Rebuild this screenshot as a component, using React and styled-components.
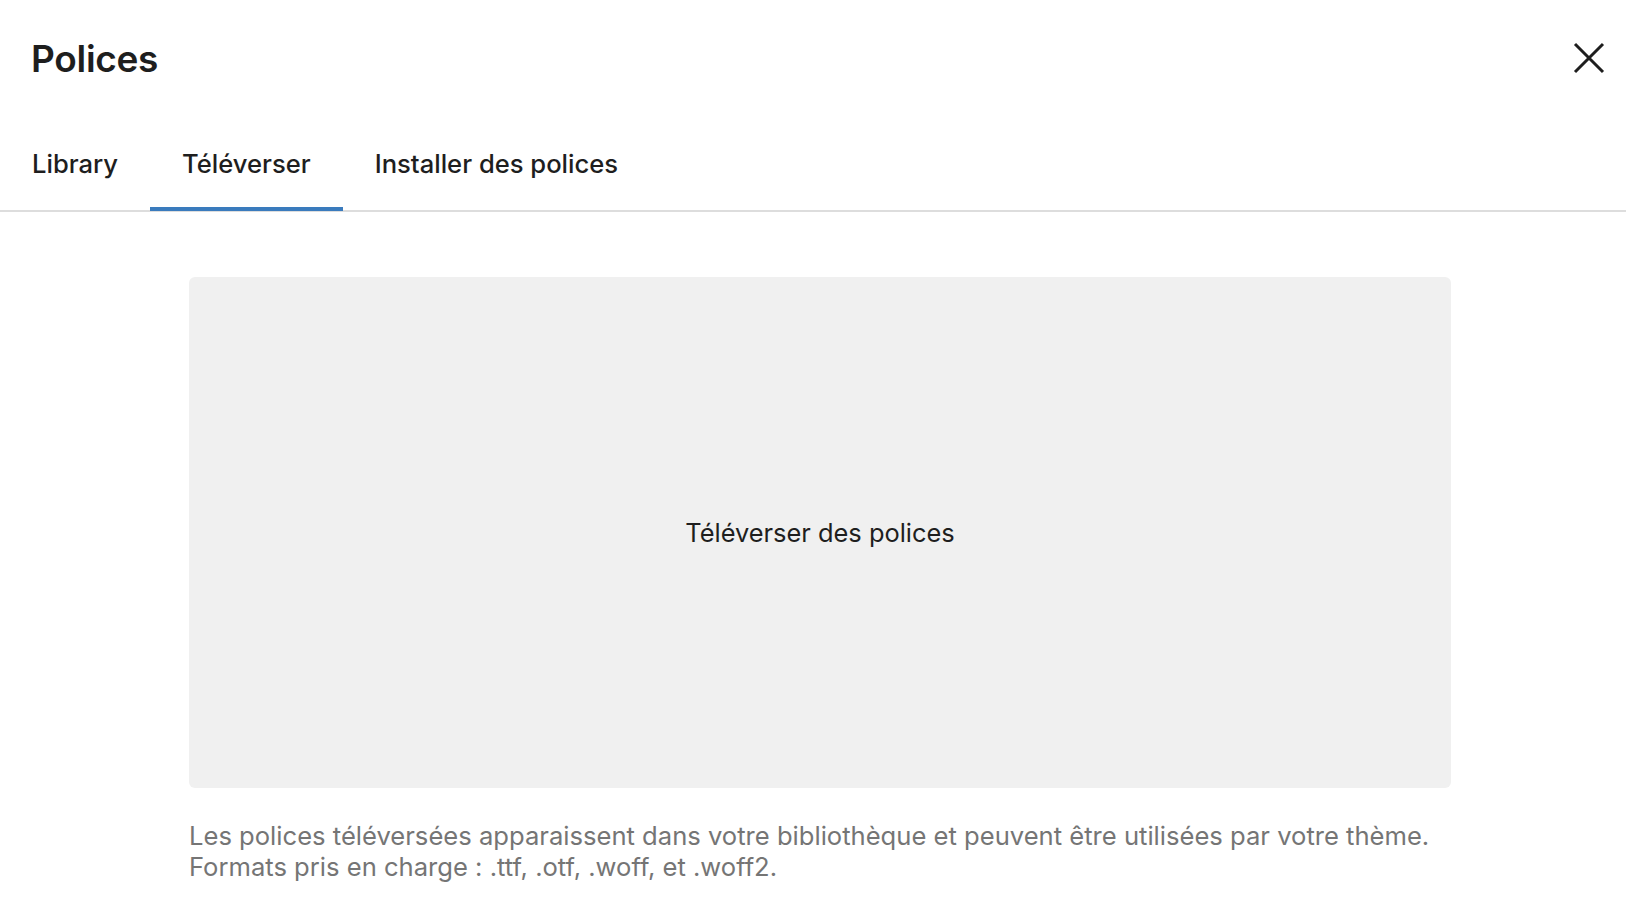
import React, { useState } from 'react';
import styled, { createGlobalStyle } from 'styled-components';

const GlobalStyle = createGlobalStyle`
  html, body {
    margin: 0;
    padding: 0;
    background: #fff;
  }
  body {
    font-family: Inter, "Noto Sans", "Liberation Sans", sans-serif;
    color: #1e1e1e;
  }
`;

const Modal = styled.div`
  width: 1626px;
  height: 900px;
  overflow: hidden;
  background: #fff;
`;

const Header = styled.header`
  display: flex;
  align-items: center;
  justify-content: space-between;
  height: 116px;
  padding: 0 13px 0 31px;
  box-sizing: border-box;
`;

const Title = styled.h1`
  margin: 0;
  font-size: 37px;
  font-weight: 600;
  letter-spacing: -0.3px;
  color: #1e1e1e;
`;

const CloseButton = styled.button`
  display: flex;
  align-items: center;
  justify-content: center;
  width: 48px;
  height: 48px;
  padding: 0;
  border: none;
  background: none;
  cursor: pointer;
  color: #1e1e1e;
`;

const TabList = styled.div`
  display: flex;
  border-bottom: 2px solid #dddddd;
`;

const Tab = styled.button`
  position: relative;
  height: 94px;
  padding: 0 32px;
  border: none;
  background: none;
  font-family: inherit;
  font-size: 25.6px;
  font-weight: 500;
  color: #1e1e1e;
  cursor: pointer;

  &::after {
    content: '';
    position: absolute;
    left: 0;
    right: 0;
    bottom: -1px;
    height: 4px;
    background: ${(p) => (p.$active ? '#3a7bbd' : 'transparent')};
  }
`;

const Content = styled.div`
  padding: 65px 175px 0 189px;
`;

const DropZone = styled.div`
  display: flex;
  align-items: center;
  justify-content: center;
  height: 511px;
  border-radius: 6px;
  background: #f0f0f0;
  font-size: 25.4px;
  color: #1e1e1e;
`;

const HelpText = styled.p`
  margin: 32px 0 0;
  font-size: 25.6px;
  line-height: 31px;
  color: #757575;
`;

const tabs = ['Library', 'Téléverser', 'Installer des polices'];

export default function App() {
  const [active, setActive] = useState(1);

  return (
    <Modal>
      <GlobalStyle />
      <Header>
        <Title>Polices</Title>
        <CloseButton aria-label="Fermer">
          <svg width="34" height="34" viewBox="0 0 34 34" fill="none">
            <path d="M3 3 L31 31 M31 3 L3 31" stroke="#1e1e1e" strokeWidth="3" />
          </svg>
        </CloseButton>
      </Header>
      <TabList>
        {tabs.map((t, i) => (
          <Tab key={t} $active={i === active} onClick={() => setActive(i)}>
            {t}
          </Tab>
        ))}
      </TabList>
      <Content>
        <DropZone>Téléverser des polices</DropZone>
        <HelpText>
          Les polices téléversées apparaissent dans votre bibliothèque et peuvent être utilisées par votre thème.
          <br />
          Formats pris en charge : .ttf, .otf, .woff, et .woff2.
        </HelpText>
      </Content>
    </Modal>
  );
}
